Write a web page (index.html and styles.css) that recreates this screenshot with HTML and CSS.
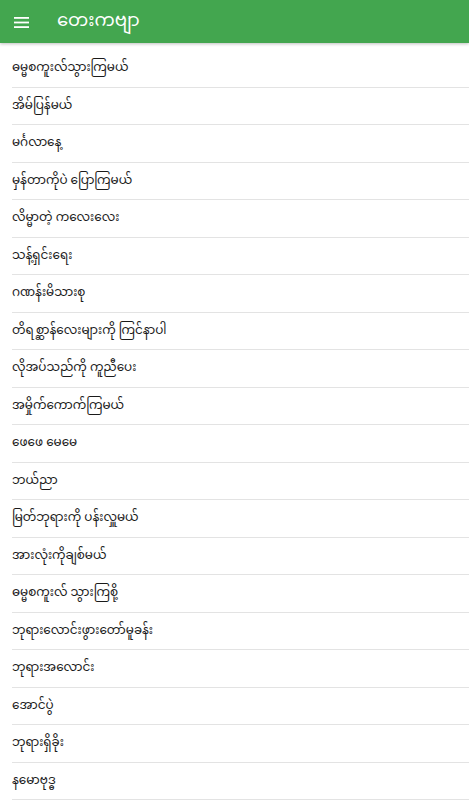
FILE: index.html
```html
<!DOCTYPE html>
<html lang="my">
<head>
<meta charset="utf-8">
<title>တေးကဗျာ</title>
<link rel="stylesheet" href="styles.css">
</head>
<body>
<header class="appbar">
  <span class="menu" aria-label="menu">
    <svg width="15" height="11" viewBox="0 0 15 11"><rect x="0" y="0" width="15" height="1.8" fill="#fff"/><rect x="0" y="4.6" width="15" height="1.8" fill="#fff"/><rect x="0" y="9.2" width="15" height="1.8" fill="#fff"/></svg>
  </span>
  <span class="title">တေးကဗျာ</span>
</header>
<ul class="list">
  <li>ဓမ္မစကူးလ်သွားကြမယ်</li>
  <li>အိမ်ပြန်မယ်</li>
  <li>မင်္ဂလာနေ့</li>
  <li>မှန်တာကိုပဲ ပြောကြမယ်</li>
  <li>လိမ္မာတဲ့ ကလေးလေး</li>
  <li>သန့်ရှင်းရေး</li>
  <li>ဂဏန်းမိသားစု</li>
  <li>တိရစ္ဆာန်လေးများကို ကြင်နာပါ</li>
  <li>လိုအပ်သည်ကို ကူညီပေး</li>
  <li>အမှိုက်ကောက်ကြမယ်</li>
  <li>ဖေဖေ မေမေ</li>
  <li>ဘယ်ညာ</li>
  <li>မြတ်ဘုရားကို ပန်းလှူမယ်</li>
  <li>အားလုံးကိုချစ်မယ်</li>
  <li>ဓမ္မစကူးလ် သွားကြစို့</li>
  <li>ဘုရားလောင်းဖွားတော်မူခန်း</li>
  <li>ဘုရားအလောင်း</li>
  <li>အောင်ပွဲ</li>
  <li>ဘုရားရှိခိုး</li>
  <li>နမောဗုဒ္ဓ</li>
</ul>
</body>
</html>
```
FILE: styles.css
```css
html, body { margin: 0; padding: 0; background: #fff; }
body { font-family: "Noto Sans Myanmar", "Padauk", "Myanmar Text", "Noto Sans", sans-serif; color: #222; width: 469px; height: 800px; overflow: hidden; }
.appbar {
  height: 43px; background: #43a64f; display: flex; align-items: center;
  box-shadow: 0 1px 3px rgba(0,0,0,0.25); position: relative; z-index: 1;
}
.menu { width: 15px; height: 11px; margin: 1px 0 0 14px; display: flex; }
.title { color: #fff; font-size: 18px; margin-left: 28px; line-height: 1; }
.list { list-style: none; margin: 0; padding: 7px 0 0 0; }
.list li {
  height: 36.5px; margin-left: 12px; border-bottom: 1px solid #e3e3e3;
  display: flex; align-items: center; font-size: 12px; color: #1a1a1a;
  white-space: nowrap;
}
```
